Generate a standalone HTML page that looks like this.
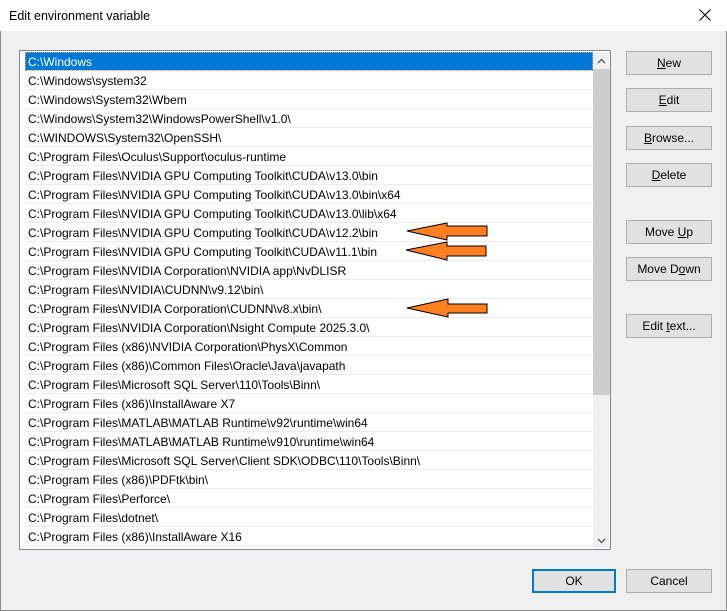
<!DOCTYPE html>
<html><head><style>
*{margin:0;padding:0;box-sizing:border-box}
body{width:727px;height:611px;background:#f0f0f0;font-family:"Liberation Sans",sans-serif;font-size:12px;color:#000;position:relative;overflow:hidden}
.win{position:absolute;left:0;top:0;width:727px;height:611px;border:1px solid #8a8a8a}
.title{position:absolute;left:0;top:0;width:727px;height:31px;background:#fff}
.title span{position:absolute;left:9px;top:9px;font-size:12.5px}
.close{position:absolute;left:698px;top:8px}
.list{position:absolute;left:19px;top:50px;width:592px;height:500px;border:1px solid #828790;background:#fff}
.row{position:absolute;left:5px;width:568px;height:19px;border-bottom:1px solid #ececec;line-height:20px;padding-left:3px;white-space:nowrap}
.sel{background:#0078d7;color:#fff;outline:1px dotted #e9a060;outline-offset:-1px}
.sb{position:absolute;left:573px;top:1px;width:17px;height:496px;background:#f0f0f0}
.thumb{position:absolute;left:0;top:17px;width:17px;height:326px;background:#cdcdcd}
.btn{position:absolute;left:626px;width:86px;height:24px;background:#e1e1e1;border:1px solid #adadad;text-align:center;line-height:23px}
.u{text-decoration:underline}
</style></head><body>
<div class="win"></div>
<div class="title"><span>Edit environment variable</span>
<svg class="close" width="14" height="14" viewBox="0 0 14 14"><path d="M1.5 1.5L12.5 12.5M12.5 1.5L1.5 12.5" stroke="#000" stroke-width="1.1"/></svg></div>
<div class="list">
<div class="row sel" style="top:1px">C:\Windows</div>
<div class="row" style="top:20px">C:\Windows\system32</div>
<div class="row" style="top:39px">C:\Windows\System32\Wbem</div>
<div class="row" style="top:58px">C:\Windows\System32\WindowsPowerShell\v1.0\</div>
<div class="row" style="top:77px">C:\WINDOWS\System32\OpenSSH\</div>
<div class="row" style="top:96px">C:\Program Files\Oculus\Support\oculus-runtime</div>
<div class="row" style="top:115px">C:\Program Files\NVIDIA GPU Computing Toolkit\CUDA\v13.0\bin</div>
<div class="row" style="top:134px">C:\Program Files\NVIDIA GPU Computing Toolkit\CUDA\v13.0\bin\x64</div>
<div class="row" style="top:153px">C:\Program Files\NVIDIA GPU Computing Toolkit\CUDA\v13.0\lib\x64</div>
<div class="row" style="top:172px">C:\Program Files\NVIDIA GPU Computing Toolkit\CUDA\v12.2\bin</div>
<div class="row" style="top:191px">C:\Program Files\NVIDIA GPU Computing Toolkit\CUDA\v11.1\bin</div>
<div class="row" style="top:210px">C:\Program Files\NVIDIA Corporation\NVIDIA app\NvDLISR</div>
<div class="row" style="top:229px">C:\Program Files\NVIDIA\CUDNN\v9.12\bin\</div>
<div class="row" style="top:248px">C:\Program Files\NVIDIA Corporation\CUDNN\v8.x\bin\</div>
<div class="row" style="top:267px">C:\Program Files\NVIDIA Corporation\Nsight Compute 2025.3.0\</div>
<div class="row" style="top:286px">C:\Program Files (x86)\NVIDIA Corporation\PhysX\Common</div>
<div class="row" style="top:305px">C:\Program Files (x86)\Common Files\Oracle\Java\javapath</div>
<div class="row" style="top:324px">C:\Program Files\Microsoft SQL Server\110\Tools\Binn\</div>
<div class="row" style="top:343px">C:\Program Files (x86)\InstallAware X7</div>
<div class="row" style="top:362px">C:\Program Files\MATLAB\MATLAB Runtime\v92\runtime\win64</div>
<div class="row" style="top:381px">C:\Program Files\MATLAB\MATLAB Runtime\v910\runtime\win64</div>
<div class="row" style="top:400px">C:\Program Files\Microsoft SQL Server\Client SDK\ODBC\110\Tools\Binn\</div>
<div class="row" style="top:419px">C:\Program Files (x86)\PDFtk\bin\</div>
<div class="row" style="top:438px">C:\Program Files\Perforce\</div>
<div class="row" style="top:457px">C:\Program Files\dotnet\</div>
<div class="row" style="top:476px">C:\Program Files (x86)\InstallAware X16</div>
<div class="sb"><div class="thumb"></div>
<svg style="position:absolute;left:4px;top:6px" width="9" height="6"><path d="M1 5L4.5 1.5L8 5" stroke="#606060" stroke-width="1.5" fill="none"/></svg>
<svg style="position:absolute;left:4px;top:486px" width="9" height="6"><path d="M1 1L4.5 4.5L8 1" stroke="#606060" stroke-width="1.5" fill="none"/></svg>
</div>
</div>
<svg style="position:absolute;left:0;top:0" width="727" height="611">
<g fill="#fd7f20" stroke="#000" stroke-width="1">
<path d="M407 231L447 223V226H487V236H447V240Z"/>
<path d="M406 250L447 242V246H486V256H447V260Z"/>
<path d="M407 308L448 299V304H487V313H448V317Z"/>
</g></svg>
<div class="btn" style="top:51px"><span class="u">N</span>ew</div>
<div class="btn" style="top:88px"><span class="u">E</span>dit</div>
<div class="btn" style="top:126px"><span class="u">B</span>rowse...</div>
<div class="btn" style="top:163px"><span class="u">D</span>elete</div>
<div class="btn" style="top:220px">Move <span class="u">U</span>p</div>
<div class="btn" style="top:257px">Move D<span class="u">o</span>wn</div>
<div class="btn" style="top:314px">Edit <span class="u">t</span>ext...</div>
<div class="btn" style="left:532px;top:569px;width:84px;border:2px solid #0078d7;line-height:21px">OK</div>
<div class="btn" style="top:569px">Cancel</div>
</body></html>
